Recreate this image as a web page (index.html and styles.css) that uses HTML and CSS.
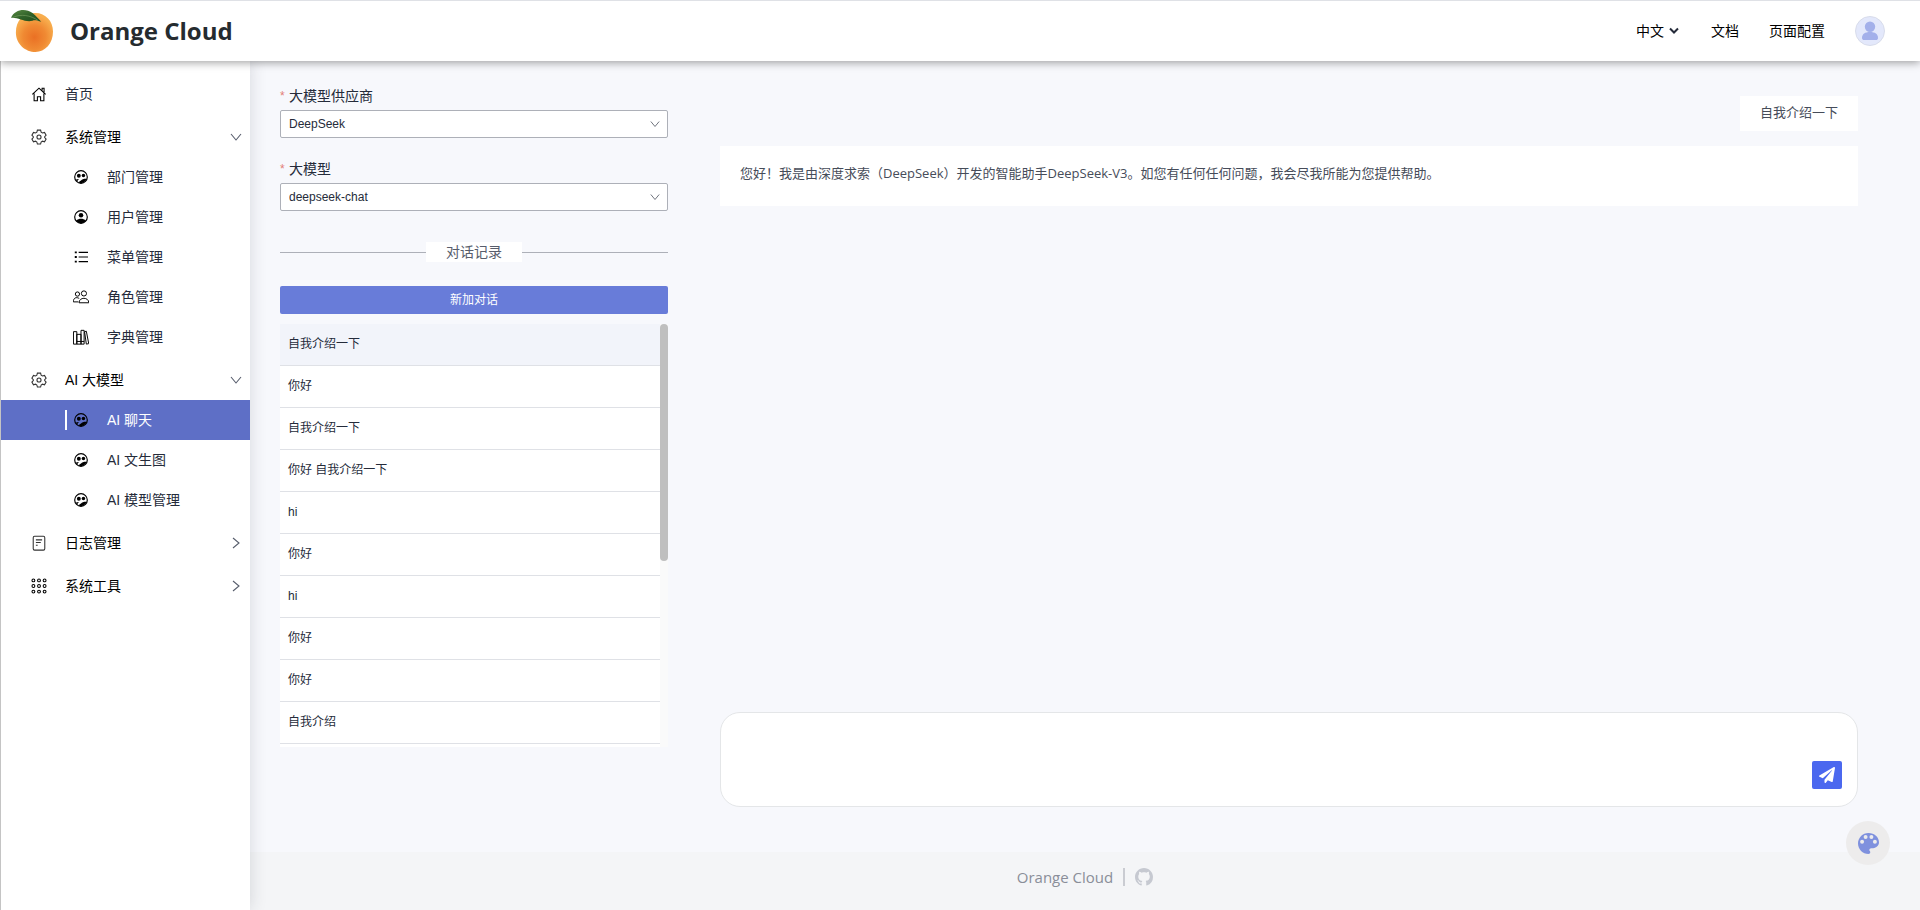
FILE: index.html
```html
<!DOCTYPE html>
<html lang="zh-CN">
<head>
<meta charset="utf-8">
<title>Orange Cloud</title>
<link rel="stylesheet" href="styles.css">
</head>
<body>
<svg class="sprite" aria-hidden="true">
  <symbol id="i-home" viewBox="0 0 18 18"><path d="M1.500 9.500 9 2.500l7.500 7M3.500 8.500v8h3.700v-4.500h3.600v4.500h3.700v-8M12.500 5V2.500h2.200V7"/></symbol>
  <symbol id="i-cog" viewBox="0 0 18 18"><path d="M7.200 1.300h3.600l.6 2.300 1.500.9 2.300-.7 1.800 3.100-1.600 1.700v1l1.600 1.700-1.800 3.100-2.300-.7-1.500.9-.6 2.300H7.200l-.6-2.300-1.500-.9-2.300.7L1 11.300l1.600-1.700v-1L1 6.900l1.800-3.100 2.300.7 1.500-.9z"/><circle cx="9" cy="9" r="2.300"/></symbol>
  <symbol id="i-dept" viewBox="0 0 24 24"><circle cx="12" cy="12" r="10.800" fill="none" stroke="#000" stroke-width="2"/><circle cx="8.300" cy="9.800" r="3.300"/><circle cx="16.200" cy="9.500" r="3"/><path d="M12 18c2-2.600 6-3.200 9.800-2.800-1.800 4.500-5.500 7.300-9.800 7.300-1.500 0-2.800-.3-4-.9.500-1.500 2-2.800 4-3.600zM3 16.500c1.800-1 3.600-1.400 5.500-1.200-1.600 1.200-2.600 2.800-3 4.800z"/></symbol>
  <symbol id="i-user" viewBox="0 0 24 24"><circle cx="12" cy="12" r="10.800" fill="none" stroke="#000" stroke-width="2"/><circle cx="12" cy="9" r="3.900"/><path d="M3.500 18C6 16 9 15.200 12 15.200s6 .8 8.500 2.800c-2 3-5 4.500-8.500 4.500S5.500 21 3.500 18z"/></symbol>
  <symbol id="i-list" viewBox="0 0 18 18"><path d="M6 3h12M6 9h12M6 15h12"/><path d="M1 3h2.600M1 9h2.600M1 15h2.600" stroke-width="2.400"/></symbol>
  <symbol id="i-role" viewBox="0 0 18 18"><circle cx="5" cy="5.700" r="2.400"/><circle cx="12.300" cy="5" r="2.900"/><path d="M6.800 15.500c0-6.700 11-6.700 11 0zM6 14.500H.4c0-4.800 3.600-5.800 6.600-3.800"/></symbol>
  <symbol id="i-books" viewBox="0 0 18 18"><path d="M.5 3h3.800v14H.5zM4.300 6H9v11H4.300zM9 1.500h3.500V17H9zM13 3l2-.5L17.700 16.500l-2.700.5zM4.300 14h8.200"/></symbol>
  <symbol id="i-doc" viewBox="0 0 18 18"><rect x="2.500" y="1.500" width="13" height="15.500" rx="1.500"/><path d="M5.500 5.500h7M5.500 8.500h5.500M5.500 11.500h2"/></symbol>
  <symbol id="i-grid" viewBox="0 0 18 18"><circle cx="2.700" cy="2.700" r="1.600"/><circle cx="9" cy="2.700" r="1.600"/><circle cx="15.300" cy="2.700" r="1.600"/><circle cx="2.700" cy="9" r="1.600"/><circle cx="9" cy="9" r="1.600"/><circle cx="15.300" cy="9" r="1.600"/><circle cx="2.700" cy="15.300" r="1.600"/><circle cx="9" cy="15.300" r="1.600"/><circle cx="15.300" cy="15.300" r="1.600"/></symbol>
  <symbol id="i-down" viewBox="0 0 12 12"><path d="M1 3l5 6 5-6"/></symbol>
  <symbol id="i-right" viewBox="0 0 12 12"><path d="M3 1l6 5-6 5"/></symbol>
</svg>

<header class="header">
  <a class="brand" href="#">
    <svg class="brand-logo" viewBox="0 0 44 44" aria-hidden="true">
      <defs>
        <radialGradient id="peel" cx="50%" cy="62%" r="56%"><stop offset="0" stop-color="#ea7024"/><stop offset=".55" stop-color="#f08a33"/><stop offset="1" stop-color="#f8ae4e"/></radialGradient>
        <linearGradient id="leaf" x1="0" y1="0" x2="1" y2="1"><stop offset="0" stop-color="#5a8a45"/><stop offset=".5" stop-color="#2f6128"/><stop offset="1" stop-color="#1f4a1c"/></linearGradient>
      </defs>
      <path d="M24 3C35 2.500 43 11 43 22c0 12-8 21-18 21S5 35 5 23 12 3.500 24 3z" fill="url(#peel)"/>
      <path d="M0 8C4-1 15-2 22 3c4 3 6 6 9 9-4-1-6-2-9-1C14 13 7 7 0 8z" fill="url(#leaf)"/>
      <path d="M2 7.500C10 4 20 5 28 11" fill="none" stroke="#7fa567" stroke-width=".6"/>
    </svg>
    <span class="brand-name">Orange Cloud</span>
  </a>
  <nav class="top-nav">
    <button class="lang" type="button">中文 <svg class="lang-arrow" viewBox="0 0 10 8" aria-hidden="true"><path d="M1 1.500l4 4 4-4"/></svg></button>
    <a class="link-docs" href="#">文档</a>
    <a class="link-config" href="#">页面配置</a>
    <button class="avatar" type="button" aria-label="用户">
      <svg viewBox="0 0 30 30" aria-hidden="true"><circle cx="15" cy="15" r="14.500" fill="#e3e8fb" stroke="#d8dcea"/><circle cx="15" cy="10.700" r="5.200" fill="#a3b0ea"/><path d="M7 22c0-4 3-6 8-6s8 2 8 6c0 1.500-1 2-2 2H9c-1 0-2-.5-2-2z" fill="#a3b0ea"/></svg>
    </button>
  </nav>
</header>

<div class="shell">
  <aside class="sidebar">
    <nav class="menu">
      <a class="item" href="#"><svg class="icon"><use href="#i-home"/></svg><span class="label soft">首页</span></a>
      <div class="group">
        <button class="item" type="button"><svg class="icon dim"><use href="#i-cog"/></svg><span class="label">系统管理</span><svg class="caret"><use href="#i-down"/></svg></button>
        <a class="sub" href="#"><svg class="sub-icon solid"><use href="#i-dept"/></svg>部门管理</a>
        <a class="sub" href="#"><svg class="sub-icon solid"><use href="#i-user"/></svg>用户管理</a>
        <a class="sub" href="#"><svg class="sub-icon"><use href="#i-list"/></svg>菜单管理</a>
        <a class="sub" href="#"><svg class="sub-icon wide"><use href="#i-role"/></svg>角色管理</a>
        <a class="sub" href="#"><svg class="sub-icon wide"><use href="#i-books"/></svg>字典管理</a>
      </div>
      <div class="group">
        <button class="item" type="button"><svg class="icon dim"><use href="#i-cog"/></svg><span class="label">AI 大模型</span><svg class="caret"><use href="#i-down"/></svg></button>
        <a class="sub active" href="#"><svg class="sub-icon solid"><use href="#i-dept"/></svg>AI 聊天</a>
        <a class="sub" href="#"><svg class="sub-icon solid"><use href="#i-dept"/></svg>AI 文生图</a>
        <a class="sub" href="#"><svg class="sub-icon solid"><use href="#i-dept"/></svg>AI 模型管理</a>
      </div>
      <button class="item" type="button"><svg class="icon dim"><use href="#i-doc"/></svg><span class="label">日志管理</span><svg class="caret"><use href="#i-right"/></svg></button>
      <button class="item" type="button"><svg class="icon"><use href="#i-grid"/></svg><span class="label">系统工具</span><svg class="caret"><use href="#i-right"/></svg></button>
    </nav>
  </aside>

  <div class="page">
    <main class="workspace">
      <section class="panel">
        <div class="field">
          <label for="vendor"><span class="required">*</span>大模型供应商</label>
          <div class="select-box"><select id="vendor"><option>DeepSeek</option></select><svg class="select-arrow"><use href="#i-down"/></svg></div>
        </div>
        <div class="field">
          <label for="model"><span class="required">*</span>大模型</label>
          <div class="select-box"><select id="model"><option>deepseek-chat</option></select><svg class="select-arrow"><use href="#i-down"/></svg></div>
        </div>
        <div class="divider"><span>对话记录</span></div>
        <button class="new-chat" type="button">新加对话</button>
        <div class="history">
          <ul class="history-list">
            <li class="current">自我介绍一下</li>
            <li>你好</li>
            <li>自我介绍一下</li>
            <li>你好 自我介绍一下</li>
            <li>hi</li>
            <li>你好</li>
            <li>hi</li>
            <li>你好</li>
            <li>你好</li>
            <li>自我介绍</li>
          </ul>
          <div class="scroll-track"><div class="scroll-thumb"></div></div>
        </div>
      </section>

      <section class="chat">
        <div class="messages">
          <p class="bubble mine">自我介绍一下</p>
          <p class="bubble reply">您好！我是由深度求索（DeepSeek）开发的智能助手DeepSeek-V3。如您有任何任何问题，我会尽我所能为您提供帮助。</p>
        </div>
        <form class="composer">
          <textarea aria-label="输入消息"></textarea>
          <button class="send" type="button" aria-label="发送"><svg viewBox="0 0 512 512" aria-hidden="true"><path d="M476 3.200L12.500 270.600c-18.100 10.400-15.800 35.600 2.200 43.200L121 358.400l287.300-253.200c5.500-4.900 13.300 2.600 8.600 8.300L176 407v80.500c0 23.600 28.500 32.900 42.500 15.800L282 426l124.600 52.200c14.200 6 30.400-2.900 33-18.200l72-432C515 7.800 493.300-6.800 476 3.200z"/></svg></button>
        </form>
      </section>
    </main>

    <footer class="footer">
      <span>Orange Cloud</span>
      <i class="bar"></i>
      <a class="github" href="#" aria-label="GitHub"><svg viewBox="0 0 16 16" aria-hidden="true"><path d="M8 0C3.580 0 0 3.580 0 8c0 3.540 2.290 6.530 5.470 7.590.4.070.55-.17.55-.38 0-.19-.01-.82-.01-1.490-2.010.37-2.530-.49-2.690-.94-.09-.23-.48-.94-.82-1.130-.28-.15-.68-.52-.01-.53.63-.01 1.080.58 1.230.82.72 1.210 1.870.87 2.330.66.070-.52.280-.87.510-1.070-1.780-.2-3.640-.89-3.640-3.950 0-.87.310-1.590.82-2.150-.08-.2-.36-1.020.080-2.120 0 0 .67-.21 2.200.82.640-.18 1.320-.27 2-.27s1.360.09 2 .27c1.530-1.040 2.200-.82 2.200-.82.440 1.100.160 1.920.080 2.120.510.560.820 1.270.820 2.150 0 3.070-1.870 3.750-3.650 3.950.290.250.540.730.540 1.480 0 1.070-.010 1.930-.010 2.200 0 .210.150.460.550.380A8.010 8.010 0 0 0 16 8c0-4.420-3.580-8-8-8z"/></svg></a>
    </footer>
  </div>
</div>

<button class="theme" type="button" aria-label="主题">
  <svg viewBox="3 3 18 18" aria-hidden="true"><path d="M12 3c-4.970 0-9 4.030-9 9s4.030 9 9 9c.83 0 1.500-.67 1.500-1.500 0-.39-.15-.74-.39-1.010-.23-.26-.38-.61-.38-.99 0-.83.67-1.500 1.500-1.500H16c2.760 0 5-2.240 5-5 0-4.420-4.030-8-9-8z"/><g fill="#edecec"><circle cx="6.500" cy="10.500" r="1.700"/><circle cx="9.500" cy="6.500" r="1.700"/><circle cx="14.500" cy="6.500" r="1.700"/><circle cx="17.500" cy="10.500" r="1.700"/></g></svg>
</button>
</body>
</html>
```
FILE: styles.css
```css
* { box-sizing: border-box; }

body {
  margin: 0;
  height: 100vh;
  display: flex;
  flex-direction: column;
  overflow: hidden;
  background: #f7f8fc;
  color: #252b3a;
  font: 14px/20px "Liberation Sans", "Noto Sans CJK SC", sans-serif;
}

a { color: inherit; text-decoration: none; }
button { font: inherit; color: inherit; border: 0; padding: 0; background: none; cursor: pointer; }
svg { flex: none; }
.sprite { position: absolute; width: 0; height: 0; }

/* Header */
.header {
  position: relative;
  z-index: 2;
  flex: none;
  height: 61px;
  display: flex;
  align-items: center;
  justify-content: space-between;
  padding: 0 35px 0 11px;
  border-top: 1px solid #dfe1e6;
  background: #fff;
  box-shadow: 0 2px 8px rgba(0, 0, 0, .35);
}
.brand { display: flex; align-items: center; gap: 16px; }
.brand-logo { width: 43px; height: 43px; }
.brand-name { color: #252b2f; font: 700 24px/32px "Open Sans", "Noto Sans", sans-serif; }
.top-nav { display: flex; align-items: center; color: #000; }
.lang { display: flex; align-items: center; gap: 5px; }
.lang-arrow { width: 10px; height: 8px; fill: none; stroke: #252b3a; stroke-width: 2; }
.link-docs { margin-left: 32px; }
.link-config { margin-left: 30px; }
.avatar { width: 30px; height: 30px; margin-left: 30px; }
.avatar svg { display: block; }

/* Sidebar */
.shell { flex: 1; min-height: 0; display: flex; }
.sidebar {
  position: relative;
  z-index: 1;
  flex: none;
  width: 250px;
  padding-top: 13px;
  border-left: 1px solid #c4c4c4;
  background: #fff;
  box-shadow: 0 0 16px rgba(37, 43, 58, .16);
}
.menu { display: flex; flex-direction: column; gap: 3px; }
.item {
  width: 100%;
  height: 40px;
  display: flex;
  align-items: center;
  padding: 0 8px 0 30px;
  color: #000;
  text-align: left;
}
.label { flex: 1; margin-left: 18px; }
.soft { color: #252b3a; }
.icon { width: 16px; height: 16px; fill: none; stroke: #000; stroke-width: 1.2; }
.dim { stroke: #333; }
.caret { width: 12px; height: 12px; fill: none; stroke: #575d6c; stroke-width: 1.1; }
.sub { height: 40px; display: flex; align-items: center; gap: 18px; padding-left: 72px; }
.sub-icon { width: 16px; height: 14px; fill: none; stroke: #000; stroke-width: 1.4; }
.wide { height: 16px; stroke-width: 1.1; }
.solid { fill: #000; stroke: none; }
.active { padding-left: 64px; background: #5e6fc6; color: #fff; }
.active::before { content: ""; width: 2px; height: 20px; margin-right: -12px; background: #fff; }

/* Page */
.page { flex: 1; min-width: 0; display: flex; flex-direction: column; }
.workspace { flex: 1; min-height: 0; display: flex; gap: 52px; padding: 25px 62px 45px 30px; }

.panel { flex: none; width: 388px; display: flex; flex-direction: column; }
.field { display: flex; flex-direction: column; gap: 4px; margin-bottom: 21px; }
.field label { display: flex; height: 20px; }
.required { width: 9px; color: #e37d77; font-size: 12px; }
.select-box { position: relative; height: 28px; }
.select-box select {
  display: block;
  width: 100%;
  height: 100%;
  padding: 0 28px 0 8px;
  appearance: none;
  border: 1px solid #adb0b8;
  border-radius: 2px;
  background: #fff;
  color: #252b3a;
  font: 12px/16px "Liberation Sans", sans-serif;
}
.select-arrow {
  position: absolute;
  top: 9px;
  right: 8px;
  width: 10px;
  height: 10px;
  fill: none;
  stroke: #71757f;
  stroke-width: 1.2;
  pointer-events: none;
}
.divider { display: flex; align-items: center; margin: 10px 0 24px; color: #575d6c; }
.divider::before, .divider::after { content: ""; flex: 1; height: 1px; background: #adb0b8; }
.divider span { padding: 0 20px; background: #fff; }
.new-chat { flex: none; height: 28px; border-radius: 2px; background: #687cd9; color: #fff; font-size: 12px; }
.history { display: flex; height: 423px; margin-top: 10px; overflow: hidden; background: #fff; }
.history-list { flex: 1; margin: 0; padding: 0; list-style: none; font-size: 12px; }
.history-list li { height: 42px; padding: 0 8px; border-bottom: 1px solid #dfe1e6; line-height: 41px; }
.history-list .current { background: #f2f4fa; }
.scroll-track { width: 8px; background: #fafafa; }
.scroll-thumb { height: 56%; border-radius: 4px; background: #bfbfbf; }

.chat { flex: 1; min-width: 0; display: flex; flex-direction: column; justify-content: space-between; padding-top: 10px; }
.messages { display: flex; flex-direction: column; gap: 15px; }
.bubble { margin: 0; background: #fff; color: #464c59; font-size: 13px; }
.mine { align-self: flex-end; padding: 7px 20px 8px; }
.reply { min-height: 60px; padding: 17px 20px; font-family: "Open Sans", "Noto Sans CJK SC", sans-serif; }
.composer { position: relative; }
.composer textarea {
  display: block;
  width: 100%;
  height: 95px;
  padding: 12px 60px 12px 20px;
  resize: none;
  border: 1px solid #e4e6e8;
  border-radius: 20px;
  background: #fff;
  font: 14px/20px "Liberation Sans", "Noto Sans CJK SC", sans-serif;
}
.send {
  position: absolute;
  right: 16px;
  bottom: 18px;
  width: 30px;
  height: 28px;
  display: grid;
  place-items: center;
  border-radius: 2px;
  background: #4b68ef;
}
.send svg { width: 16px; height: 16px; fill: #fff; }

.footer {
  flex: none;
  height: 58px;
  display: flex;
  align-items: center;
  justify-content: center;
  gap: 10px;
  padding-bottom: 9px;
  background: #f4f5f7;
  color: #8a8e99;
  font: 15px/20px "Open Sans", "Noto Sans", sans-serif;
}
.bar { width: 2px; height: 18px; background: #caccd2; }
.github svg { display: block; width: 18px; height: 18px; fill: #c6c9d1; }

.theme {
  position: fixed;
  z-index: 3;
  right: 30px;
  bottom: 45px;
  width: 44px;
  height: 44px;
  display: grid;
  place-items: center;
  border-radius: 50%;
  background: #edecec;
}
.theme svg { width: 21px; height: 21px; fill: #7f91de; }
```
